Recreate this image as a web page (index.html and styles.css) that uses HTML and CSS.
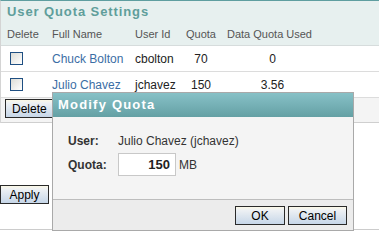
FILE: index.html
```html
<!DOCTYPE html>
<html lang="en">
<head>
    <meta charset="UTF-8">
    <title>User Quota Settings</title>
    <link rel="stylesheet" href="styles.css">
</head>
<body>
    <div class="panel">
        <div class="panel-head">
            <h2 class="panel-title">User Quota Settings</h2>
            <div class="grid-row head-row">
                <div class="c-del">Delete</div>
                <div>Full Name</div>
                <div>User Id</div>
                <div class="c-num">Quota</div>
                <div class="c-num">Data Quota Used</div>
            </div>
        </div>

        <div class="grid-row data-row">
            <div class="c-box"><input type="checkbox" class="check"></div>
            <div><a href="#" class="user-link">Chuck Bolton</a></div>
            <div>cbolton</div>
            <div class="c-num">70</div>
            <div class="c-num c-used">0</div>
        </div>
        <div class="grid-row data-row">
            <div class="c-box"><input type="checkbox" class="check"></div>
            <div><a href="#" class="user-link">Julio Chavez</a></div>
            <div>jchavez</div>
            <div class="c-num">150</div>
            <div class="c-num c-used">3.56</div>
        </div>

        <div class="panel-actions">
            <button class="btn">Delete</button>
        </div>
    </div>

    <div class="apply-bar">
        <button class="btn">Apply</button>
    </div>

    <!-- modal dialog over the page -->
    <div class="dialog">
        <div class="dialog-title">Modify Quota</div>
        <div class="dialog-body">
            <div class="field">
                <span class="field-label">User:</span>
                <span>Julio Chavez (jchavez)</span>
            </div>
            <div class="field">
                <span class="field-label">Quota:</span>
                <input type="text" class="quota-input" value="150">
                <span>MB</span>
            </div>
        </div>
        <div class="dialog-foot">
            <button class="btn btn-ok">OK</button>
            <button class="btn btn-cancel">Cancel</button>
        </div>
    </div>
</body>
</html>
```

FILE: styles.css
```css
body {
    margin: 0;
    font-family: 'Liberation Sans', Arial, sans-serif;
    font-size: 12px;
    color: #222;
    background-color: #fff;
}
.panel {
    border-top: 1px solid #5f9ea0;
    border-left: 1px solid #d4d4d4;
}
.panel-head {
    background-color: #e7f0ef;
    border-bottom: 1px solid #d6dcdc;
}
.panel-title {
    margin: 0;
    padding: 3px 0 0 6px;
    height: 19px;
    font-size: 13px;
    font-weight: bold;
    letter-spacing: 0.9px;
    color: #5f9e9b;
}
.grid-row {
    display: grid;
    grid-template-columns: 51px 83px 45px 42px 95px;
    align-items: center;
}
.head-row {
    height: 22px;
    font-size: 11px;
    color: #555;
}
.c-del {
    padding-left: 6px;
}
.c-num {
    text-align: center;
}
.c-used {
    padding-left: 6px;
}
.data-row {
    height: 25px;
    border-bottom: 1px solid #dcdcdc;
}
.c-box {
    padding-left: 9px;
    display: flex;
}
.check {
    appearance: none;
    -webkit-appearance: none;
    margin: 0;
    width: 13px;
    height: 13px;
    border: 1px solid #1f4f82;
    background: linear-gradient(135deg, #dcdcd6, #fff);
    box-sizing: border-box;
}
.user-link {
    color: #3b6ea5;
    text-decoration: none;
}
.panel-actions {
    height: 25px;
    background-color: #f4f4f4;
    border-bottom: 1px solid #cfcfcf;
    padding-left: 4px;
    box-sizing: border-box;
    padding-top: 1px;
}
.btn {
    font-family: 'Liberation Sans', Arial, sans-serif;
    font-size: 12px;
    color: #000;
    height: 19px;
    padding: 0 6px;
    border: 1px solid #2a2a2a;
    border-radius: 0;
    background: linear-gradient(#fbf8e6 0, #eef1f4 3px, #c6d6e8);
    cursor: pointer;
}
.apply-bar {
    height: 107px;
    box-sizing: border-box;
    padding-top: 62px;
    border-bottom: 1px solid #cccccc;
}
.apply-bar .btn {
    width: 49px;
}
.dialog {
    position: absolute;
    left: 52px;
    top: 92px;
    width: 300px;
    border: 1px solid #a9a9a9;
    background-color: #f4f4f4;
}
.dialog-title {
    height: 24px;
    line-height: 24px;
    padding-left: 5px;
    font-size: 13px;
    font-weight: bold;
    letter-spacing: 1.2px;
    color: #fff;
    background: linear-gradient(#87c1c7, #64a0a4);
}
.dialog-body {
    height: 82px;
    padding: 12px 0 0 15px;
    box-sizing: border-box;
    color: #333;
}
.field {
    display: flex;
    align-items: center;
    height: 23px;
    margin-bottom: 1px;
}
.field-label {
    width: 50px;
    font-weight: bold;
}
.quota-input {
    width: 58px;
    height: 23px;
    box-sizing: border-box;
    margin: 0 3px 0 0;
    padding: 0 5px;
    border: 1px solid #c8c8c8;
    background-color: #fff;
    text-align: right;
    font-family: 'Liberation Sans', Arial, sans-serif;
    font-size: 13px;
    font-weight: bold;
    color: #222;
}
.dialog-foot {
    height: 31px;
    border-top: 1px solid #bdbdbd;
    background-color: #ececec;
    display: flex;
    justify-content: flex-end;
    align-items: flex-start;
    gap: 3px;
    padding: 6px 6px 0 0;
    box-sizing: border-box;
}
.btn-ok {
    width: 50px;
}
.btn-cancel {
    width: 59px;
}
```
